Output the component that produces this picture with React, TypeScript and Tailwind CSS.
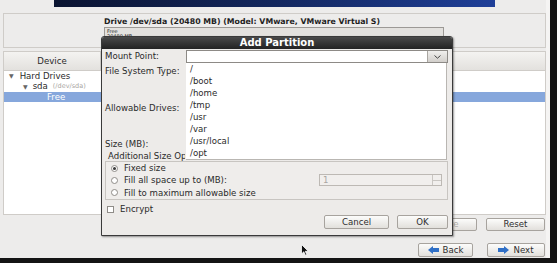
import type { ReactNode } from 'react'

const mountPoints = ['/', '/boot', '/home', '/tmp', '/usr', '/var', '/usr/local', '/opt']

function Button({ children, className = '', disabled = false }: { children: ReactNode; className?: string; disabled?: boolean }) {
  return (
    <div
      className={`flex items-center justify-center gap-[4px] rounded-[2px] border border-[#a7a39e] bg-gradient-to-b from-[#fcfcfb] to-[#e2e0dc] ${
        disabled ? 'text-[#b0aeaa]' : 'text-[#2e2e2e]'
      } ${className}`}
    >
      {children}
    </div>
  )
}

function Radio({ checked = false }: { checked?: boolean }) {
  return (
    <span className="flex h-[7px] w-[7px] items-center justify-center rounded-full border border-[#8f8c88] bg-white">
      {checked && <span className="h-[3px] w-[3px] rounded-full bg-[#3a3a3a]" />}
    </span>
  )
}

function Arrow({ dir }: { dir: 'left' | 'right' }) {
  return (
    <svg width="11" height="8" viewBox="0 0 11 8" className={dir === 'left' ? '' : 'rotate-180'}>
      <path d="M0 4 L5 0 L5 2 L11 2 L11 6 L5 6 L5 8 Z" fill="#2f6fc6" />
    </svg>
  )
}

function AddPartitionDialog() {
  return (
    <div className="absolute left-[101px] top-[36px] flex h-[200px] w-[352px] flex-col overflow-hidden rounded-t-[3px] border border-[#3a3a3a] bg-[#edebe9] shadow-[1px_1px_2px_rgba(0,0,0,0.4)]">
      <div className="flex h-[12px] shrink-0 items-center justify-center bg-gradient-to-b from-[#4a4a4a] to-[#232323] text-[10px] font-bold leading-none text-white">
        Add Partition
      </div>

      <div className="flex flex-1 flex-col pl-[3px] pr-[4px]">
        <div className="mt-[1px] flex h-[13px] items-center">
          <span className="w-[81px]">Mount Point:</span>
          <div className="flex h-full flex-1 border border-[#8d8a86] bg-white">
            <div className="flex-1" />
            <div className="flex w-[20px] items-center justify-center border-l border-[#a9a6a1] bg-gradient-to-b from-[#f0efed] to-[#d2cfcb]">
              <svg width="7" height="4" viewBox="0 0 7 4">
                <path d="M0.5 0.5 L3.5 3.2 L6.5 0.5" fill="none" stroke="#444" strokeWidth="1" />
              </svg>
            </div>
          </div>
        </div>
        <div className="flex h-[16px] items-center">File System Type:</div>
        <div className="flex h-[58px] items-center">Allowable Drives:</div>
        <div className="flex h-[14px] items-center">Size (MB):</div>
        {/* the open mount point list hides the end of this label */}
        <div className="flex h-[10px] w-[80px] items-center overflow-hidden whitespace-nowrap pl-[3px]">
          Additional Size Options
        </div>

        <div className="flex h-[39px] flex-col border border-[#c8c5c1] bg-[#efedeb]">
          <div className="flex h-[13px] items-center gap-[6px] pl-[5px]">
            <Radio checked />
            <span>Fixed size</span>
          </div>
          <div className="flex h-[13px] items-center gap-[6px] pl-[5px] pr-[5px]">
            <Radio />
            <span>Fill all space up to (MB):</span>
            <div className="ml-auto flex h-[12px] w-[123px] border border-[#bdb9b4] bg-[#f1efed] text-[#a9a6a2]">
              <span className="flex-1 pl-[3px] leading-[10px]">1</span>
              <div className="flex w-[9px] flex-col border-l border-[#c9c6c2]">
                <span className="flex-1 border-b border-[#c9c6c2]" />
                <span className="flex-1" />
              </div>
            </div>
          </div>
          <div className="flex h-[13px] items-center gap-[6px] pl-[5px]">
            <Radio />
            <span>Fill to maximum allowable size</span>
          </div>
        </div>

        <div className="mt-[3px] flex h-[12px] items-center gap-[6px] pl-[2px]">
          <span className="h-[7px] w-[7px] border border-[#8f8c88] bg-white" />
          <span>Encrypt</span>
        </div>

        <div className="flex h-[14px] justify-end gap-[8px]">
          <Button className="w-[65px]">Cancel</Button>
          <Button className="w-[51px]">OK</Button>
        </div>
      </div>

      <div className="absolute left-[84px] top-[26px] flex h-[97px] w-[261px] flex-col border-r border-b border-[#b9b6b2] bg-white pl-[4px]">
        {mountPoints.map((m) => (
          <div key={m} className="flex h-[12px] items-center">
            {m}
          </div>
        ))}
      </div>
    </div>
  )
}

export default function App() {
  return (
    <div className="relative flex h-[263px] w-[557px] flex-col overflow-hidden bg-[#edeceb] font-['DejaVu_Sans',sans-serif] text-[8.6px] leading-none text-[#2a2a2a]">
      <div className="flex flex-1">
        <div className="flex flex-1 flex-col pl-[3px]">
          <div className="ml-[51px] h-[7px] w-[441px] bg-gradient-to-r from-[#0b1431] via-[#13275e] to-[#1f3f98]" />

          <div className="mt-[6px] flex h-[35px] flex-col border border-[#cfccc8] pl-[100px] pt-[4px]">
            <div className="h-[9px] text-[7.8px] font-bold leading-[8px] text-[#1e1e1e]">
              Drive /dev/sda (20480 MB) (Model: VMware, VMware Virtual S)
            </div>
            <div className="flex h-[12px] w-[340px] flex-col border border-[#9c9995] bg-[#e3e1de] pl-[2px] pt-[1px] text-[5px] leading-[5px]">
              <span>Free</span>
              <span>20480 MB</span>
            </div>
          </div>

          <div className="mt-[3px] flex h-[164px] flex-col border border-[#cfccc8] bg-white">
            <div className="flex h-[19px] shrink-0 border-b border-[#cfccc8] bg-gradient-to-b from-[#f4f3f1] to-[#e3e1de]">
              <div className="flex w-[97px] items-center justify-center border-r border-[#cfccc8]">Device</div>
              <div className="flex-1" />
            </div>
            <div className="flex h-[10px] items-center gap-[6px] pl-[5px]">
              <span className="text-[6px] text-[#666]">▼</span>
              <span>Hard Drives</span>
            </div>
            <div className="flex h-[11px] items-center gap-[5px] pl-[19px]">
              <span className="text-[6px] text-[#666]">▼</span>
              <span>sda</span>
              <span className="text-[6.5px] text-[#a8a6a2]">(/dev/sda)</span>
            </div>
            <div className="flex h-[10px] items-center bg-[#86a7dc] pl-[43px] text-white">Free</div>
          </div>

          <div className="mt-[3px] flex h-[13px] justify-end gap-[9px] pr-[1px]">
            <Button className="w-[65px]" disabled>
              Delete
            </Button>
            <Button className="w-[59px]">Reset</Button>
          </div>

          <div className="mt-[12px] flex h-[14px] justify-end gap-[14px] pr-[1px]">
            <Button className="w-[55px]">
              <Arrow dir="left" />
              <span>Back</span>
            </Button>
            <Button className="w-[58px]">
              <Arrow dir="right" />
              <span>Next</span>
            </Button>
          </div>
        </div>
        <div className="w-[4px] bg-[#f5f4f3]" />
        <div className="w-[7px] bg-[#141414]" />
      </div>
      <div className="h-[5px] bg-[#141414]" />

      <AddPartitionDialog />

      <svg className="absolute left-[301px] top-[244px]" width="8" height="12" viewBox="0 0 8 12">
        <path d="M0.5 0.5 L0.5 10 L2.8 7.8 L4.4 11.3 L5.8 10.7 L4.3 7.3 L7.3 7.3 Z" fill="#111" stroke="#fff" strokeWidth="0.8" />
      </svg>
    </div>
  )
}
